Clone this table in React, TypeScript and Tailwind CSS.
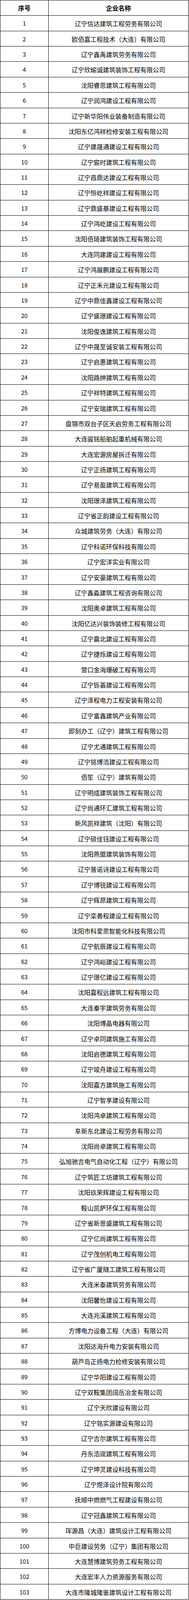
import React from "react";

const names: string[] = [
  "辽宁信达建筑工程劳务有限公司",
  "欧佰嘉工程技术（大连）有限公司",
  "辽宁鑫禹建筑劳务有限公司",
  "辽宁欣瑜诚建筑装饰工程有限公司",
  "沈阳睿思建筑工程有限公司",
  "辽宁润鸿建设工程有限公司",
  "辽宁新华阳伟业装备制造有限公司",
  "沈阳东亿鸿祥检修安装工程有限公司",
  "辽宁建晟通建设工程有限公司",
  "辽宁宸时建筑工程有限公司",
  "辽宁昌鼎达建设工程有限公司",
  "辽宁恒屹祥建设工程有限公司",
  "辽宁鼎盛基建设工程有限公司",
  "辽宁鸿屹建设工程有限公司",
  "沈阳佰琦建筑装饰工程有限公司",
  "大连同建建设工程有限公司",
  "辽宁鸿展鹏建设工程有限公司",
  "辽宁正禾元建设工程有限公司",
  "辽宁中鼎佳鑫建设工程有限公司",
  "辽宁盛璟建设工程有限公司",
  "沈阳俊逸建筑工程有限公司",
  "辽宁中晟至诚安装工程有限公司",
  "辽宁启惠建筑工程有限公司",
  "沈阳路绅建筑工程有限公司",
  "辽宁祥特建筑工程有限公司",
  "辽宁安瑞建筑工程有限公司",
  "盘锦市双台子区天启劳务工程有限公司",
  "大连骏铭船舶起重机械有限公司",
  "大连宏源房屋拆迁有限公司",
  "辽宁正扬建筑工程有限公司",
  "辽宁易盈建筑工程有限公司",
  "沈阳璟泽建筑工程有限公司",
  "辽宁省正韵建设工程有限公司",
  "众城建筑劳务（大连）有限公司",
  "辽宁科诺环保科技有限公司",
  "辽宁宏洋实业有限公司",
  "辽宁安豪建筑工程有限公司",
  "辽宁鑫淼建筑工程咨询有限公司",
  "沈阳奥卓建筑工程有限公司",
  "沈阳亿达兴装饰装修工程有限公司",
  "辽宁赢北建设工程有限公司",
  "辽宁捷烁建设工程有限公司",
  "营口金海爆破工程有限公司",
  "辽宁铄荟建设工程有限公司",
  "辽宁泽程电力工程安装有限公司",
  "辽宁富鑫建筑产业有限公司",
  "即刻办工（辽宁）建筑工程有限公司",
  "辽宁尤通建筑工程有限公司",
  "辽宁铭博浩建设工程有限公司",
  "佰笙（辽宁）建筑有限公司",
  "辽宁明成建筑装饰工程有限公司",
  "辽宁尚通环汇建筑工程有限公司",
  "新风凯祥建筑（沈阳）有限公司",
  "辽宁硕佳钰建设工程有限公司",
  "沈阳燕盟建筑装饰有限公司",
  "辽宁普诺诗建设工程有限公司",
  "辽宁博锐建设工程有限公司",
  "辽宁辉昂建筑工程有限公司",
  "辽宁栾善程建设工程有限公司",
  "沈阳市科爱思智能化科技有限公司",
  "辽宁航辰建设工程有限公司",
  "辽宁鸿峪建设工程有限公司",
  "辽宁璟亿建设工程有限公司",
  "沈阳嘉程远建筑工程有限公司",
  "大连秦宇建筑劳务有限公司",
  "沈阳博晶电器有限公司",
  "辽宁卓同建筑施工有限公司",
  "沈阳启德建筑工程有限公司",
  "辽宁竣舟建设工程有限公司",
  "沈阳嘉方建筑施工有限公司",
  "辽宁智享建设有限公司",
  "沈阳鸿卓建筑工程有限公司",
  "阜新东北建设工程劳务有限公司",
  "沈阳尚卓建筑工程有限公司",
  "弘旭驰吉电气自动化工程（辽宁）有限公司",
  "辽宁筑匠工坊建筑工程有限公司",
  "沈阳玖荣辉建设工程有限公司",
  "鞍山凯萨环保工程有限公司",
  "辽宁省新恩盛建筑工程有限公司",
  "辽宁亿尚建筑工程有限公司",
  "辽宁茂创机电工程有限公司",
  "辽宁省广厦隧工建筑工程有限公司",
  "大连米泰建筑劳务有限公司",
  "沈阳馨怡建设工程有限公司",
  "大连兆溪建筑工程有限公司",
  "方博电力设备工程（大连）有限公司",
  "沈阳达海升电力安装有限公司",
  "葫芦岛正扬电力检修安装有限公司",
  "辽宁华阳建设工程有限公司",
  "辽宁双鞍集团阔岳冶金有限公司",
  "辽宁天欣建设有限公司",
  "辽宁铭实源建设有限公司",
  "辽宁吉尔建筑工程有限公司",
  "丹东浩宬建筑工程有限公司",
  "辽宁坤灵建设科技有限公司",
  "辽宁煜泽设计院有限公司",
  "抚顺中燃燃气工程建设有限公司",
  "辽宁冠鑫建筑工程有限公司",
  "珲源昌（大连）建筑设计工程有限公司",
  "中巨建设劳务（辽宁）集团有限公司",
  "大连慧博建筑劳务工程有限公司",
  "大连宏丰人力资源服务有限公司",
  "大连市隆城隆鉴建筑设计工程有限公司",
];

// The photographed viewport is shorter than the nominal page height, so the
// row pitch is computed so every line lands where a 40px pitch would after
// the photo is fitted to the nominal height.
const FIT = Math.min(1, (typeof window !== "undefined" ? window.innerHeight : 4162) / 4162);
const lineAt = (k: number) => Math.round(k * 40 * FIT);
const rowHeight = (k: number) => lineAt(k + 1) - lineAt(k);

function Row({ k, left, right, bold }: { k: number; left: React.ReactNode; right: React.ReactNode; bold?: boolean }) {
  return (
    <div className="grid grid-cols-[124px_359px] shrink-0 overflow-hidden" style={{ height: rowHeight(k) }}>
      <div
        className={
          bold
            ? "border-r border-b border-black flex items-center justify-center text-[16px] leading-[16px] font-bold"
            : "border-r border-b border-black flex items-center justify-center text-[15px] leading-[16px] pt-[1px]"
        }
      >
        {left}
      </div>
      <div
        className={
          bold
            ? "border-r border-b border-black flex items-center justify-center text-[16px] leading-[16px] font-bold"
            : "border-r border-b border-black flex items-center justify-center text-[16px] leading-[16px] whitespace-nowrap pt-[1px]"
        }
      >
        {right}
      </div>
    </div>
  );
}

export default function App() {
  return (
    <div className="bg-white w-[485px] font-['Noto_Sans_CJK_SC','Noto_Sans',sans-serif] text-black">
      <div className="w-[484px] border-l border-t border-black flex flex-col">
        <Row k={0} left="序号" right="企业名称" bold />
        {names.map((n, i) => (
          <Row key={i} k={i + 1} left={i + 1} right={n} />
        ))}
      </div>
    </div>
  );
}
